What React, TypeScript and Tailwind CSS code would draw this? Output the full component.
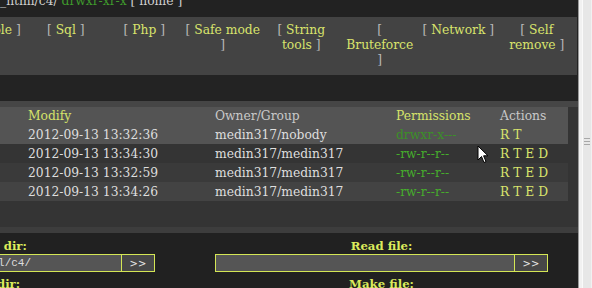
import React from "react";

const menu: string[][] = [
  ["[ Console ]"],
  ["[ Sql ]"],
  ["[ Php ]"],
  ["[ Safe mode", "]"],
  ["[ String", "tools ]"],
  ["[", "Bruteforce", "]"],
  ["[ Network ]"],
  ["[ Self", "remove ]"],
];

const rows = [
  { date: "2012-09-13 13:32:36", owner: "medin317/nobody", perms: "drwxr-x---", dim: true, actions: "R T", bg: "bg-[#545454]" },
  { date: "2012-09-13 13:34:30", owner: "medin317/medin317", perms: "-rw-r--r--", dim: false, actions: "R T E D", bg: "bg-[#343434]" },
  { date: "2012-09-13 13:32:59", owner: "medin317/medin317", perms: "-rw-r--r--", dim: false, actions: "R T E D", bg: "bg-[#3a3a3a]" },
  { date: "2012-09-13 13:34:26", owner: "medin317/medin317", perms: "-rw-r--r--", dim: false, actions: "R T E D", bg: "bg-[#434343]" },
];

const colorize = (s: string) =>
  s.split(/(\[|\])/).map((p, i) =>
    p === "[" || p === "]" ? (
      <span key={i} className="text-[#b8b8b8]">{p}</span>
    ) : (
      <span key={i} className="text-[#d9e46c]">{p}</span>
    )
  );

const FileForm = ({ label, value }: { label: string; value: string }) => (
  <div className="w-[393px] shrink-0 flex flex-col items-center">
    <div className="font-bold text-[11.7px] leading-[15px] text-[#dcec5c]">{label}</div>
    <div className="flex">
      <input
        readOnly
        value={value}
        className="w-[300px] h-[18px] bg-[#555] border border-[#d4e655] pl-[10px] font-['Liberation_Mono',monospace] text-[11px] text-[#dcdcdc] outline-none"
      />
      <button className="w-[33px] h-[18px] bg-[#474747] border border-l-0 border-[#d4e655] font-['DejaVu_Sans',sans-serif] text-[10px] text-[#e8e8e8]">
        &gt;&gt;
      </button>
    </div>
  </div>
);

export default function App() {
  return (
    <div className="w-[592px] h-[288px] overflow-hidden flex bg-[#222] font-['DejaVu_Serif',serif] text-[12.3px]">
      <div className="w-[578px] shrink-0 overflow-hidden relative">
        {/* path line */}
        <div className="h-[17px] bg-[#222] whitespace-nowrap overflow-hidden">
          <div className="-mt-[6px] leading-[15px]">
            <span className="text-[#cfcfcf]">_html/c4/ </span>
            <span className="text-[#3f9a2c]">drwxr-xr-x</span>
            <span className="text-[#d0d0d0]"> [ home ]</span>
          </div>
        </div>

        {/* menu */}
        <div className="h-[58px] bg-[#434343] w-[577px] overflow-hidden">
          <div className="flex -ml-[52px] pt-[6px]">
            {menu.map((lines, i) => (
              <div key={i} className="w-[78.5px] shrink-0 text-center leading-[15px] whitespace-nowrap">
                {lines.map((l, j) => (
                  <div key={j}>{colorize(l)}</div>
                ))}
              </div>
            ))}
          </div>
        </div>

        <div className="h-[26px] bg-[#232323]" />

        {/* files */}
        <div className="bg-[#343434] border-t-[6px] border-[#464646] pr-[10px]">
          <div className="grid grid-cols-[26px_187px_181px_104px_70px] h-[18px] pt-[1px] items-center bg-[#545454] leading-[15px]">
            <div />
            <div className="px-[2px] text-[#d6e36a]">Modify</div>
            <div className="px-[2px] text-[#c9c9c9]">Owner/Group</div>
            <div className="px-[2px] text-[#d6e36a]">Permissions</div>
            <div className="px-[2px] text-[#c9c9c9]">Actions</div>
          </div>
          {rows.map((r, i) => (
            <div key={i} className={`grid grid-cols-[26px_187px_181px_104px_70px] h-[19px] pt-[1px] items-center leading-[15px] ${r.bg}`}>
              <div />
              <div className="px-[2px] text-[#dedede]">{r.date}</div>
              <div className="px-[2px] text-[#dedede]">{r.owner}</div>
              <div className={`px-[2px] ${r.dim ? "text-[#3c8f28]" : "text-[#46ad2c]"}`}>{r.perms}</div>
              <div className="px-[2px] text-[#d9e46c] whitespace-pre">{r.actions}</div>
            </div>
          ))}
          <div className="h-[26px]" />
        </div>
        <div className="h-[6px] bg-[#3d3d3d]" />

        {/* forms */}
        <div className="bg-[#212121] pt-[6px] flex -ml-[208px]">
          <div className="flex flex-col">
            <FileForm label="Change dir:" value="/home/medin317/public_html/c4/" />
            <div className="mt-[5px] flex justify-center">
              <div className="font-bold text-[11.7px] leading-[15px] text-[#dcec5c]">Make dir:</div>
            </div>
          </div>
          <div className="flex flex-col">
            <FileForm label="Read file:" value="" />
            <div className="mt-[5px] flex justify-center">
              <div className="font-bold text-[11.7px] leading-[15px] text-[#dcec5c]">Make file:</div>
            </div>
          </div>
        </div>

        {/* mouse pointer */}
        <svg className="absolute left-[477px] top-[145px]" width="12" height="19" viewBox="0 0 12 19">
          <path d="M1 1 L1 15 L4.5 11.5 L7 17.5 L9 16.6 L6.6 10.8 L11 10.8 Z" fill="#fff" stroke="#000" strokeWidth="1" strokeLinejoin="round" />
        </svg>
      </div>

      {/* scrollbar */}
      <div className="w-[14px] shrink-0 bg-[#f1f1f1] border-l border-[#9a9a9a] flex">
        <div className="ml-[3px] w-[9px] bg-[#e7e7e7] border-l border-[#fafafa] flex items-start">
          <div className="mt-[138px] ml-[1px] flex flex-col gap-[2px]">
            <div className="w-[6px] h-[1px] bg-[#a8a8a8]" />
            <div className="w-[6px] h-[1px] bg-[#a8a8a8]" />
            <div className="w-[6px] h-[1px] bg-[#a8a8a8]" />
          </div>
        </div>
      </div>
    </div>
  );
}
